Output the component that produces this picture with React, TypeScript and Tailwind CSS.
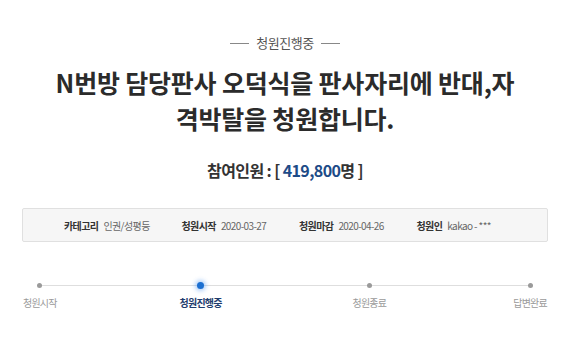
import React from 'react'

// Petition detail header: status, title, count, info box and progress steps
const infoItems = [
  { label: '카테고리', value: '인권/성평등' },
  { label: '청원시작', value: '2020-03-27' },
  { label: '청원마감', value: '2020-04-26' },
  { label: '청원인', value: 'kakao - ***' },
]

const steps = [
  { label: '청원시작', active: false, gap: 'ml-0' },
  { label: '청원진행중', active: true, gap: 'ml-[101px]' },
  { label: '청원종료', active: false, gap: 'ml-[109px]' },
  { label: '답변완료', active: false, gap: 'ml-[101px]' },
]

const App: React.FC = () => {
  return (
    <div className="w-[570px] h-[338px] bg-white overflow-hidden font-['Noto_Sans_CJK_KR','Noto_Sans',sans-serif]">
      {/* status */}
      <div className="pt-[34px] flex items-center justify-center">
        <span className="w-[19px] h-px bg-[#888]" />
        <span className="mx-[7px] text-[13px] leading-[18px] tracking-[-0.5px] text-[#555]">청원진행중</span>
        <span className="w-[19px] h-px bg-[#888]" />
      </div>

      {/* title */}
      <h1 className="mt-[12px] text-center text-[25px] leading-[36px] font-bold tracking-[-0.2px] text-[#2b2b2b]">
        N번방 담당판사 오덕식을 판사자리에 반대,자
        <br />
        격박탈을 청원합니다.
      </h1>

      {/* count */}
      <div className="mt-[22px] text-center text-[16px] leading-[24px] font-bold tracking-[-0.6px] text-[#333]">
        참여인원 : [ <span className="text-[#1d4b87]">419,800</span>명 ]
      </div>

      {/* info box */}
      <div className="mt-[26px] mx-[22px] h-[34px] border border-[#e0e0e0] rounded-[2px] bg-[#f6f6f6] flex items-center pl-[41px]">
        {infoItems.map((item) => (
          <div key={item.label} className="w-[117.5px] flex items-center text-[10px] tracking-[-0.6px]">
            <span className="font-bold text-[#333] mr-[5px]">{item.label}</span>
            <span className="text-[#666]">{item.value}</span>
          </div>
        ))}
      </div>

      {/* progress */}
      <div className="relative mt-[38px] px-[10px]">
        <div className="absolute left-[40px] right-[39px] top-[5px] h-px bg-[#dedede]" />
        <div className="flex">
          {steps.map((step) => (
            <div key={step.label} className={`${step.gap} w-[60px] flex flex-col items-center`}>
              <div className="h-[10px] flex items-center justify-center">
                {step.active ? (
                  <span className="relative w-[7px] h-[7px] rounded-full bg-[#1b6fd1] shadow-[0_0_4px_2px_rgba(80,150,240,0.45)]" />
                ) : (
                  <span className="relative w-[5px] h-[5px] rounded-full bg-[#9a9a9a]" />
                )}
              </div>
              <span
                className={
                  step.active
                    ? 'mt-[6px] text-[10px] leading-[14px] font-bold tracking-[-0.8px] text-[#1f3d6e]'
                    : 'mt-[6px] text-[10px] leading-[14px] tracking-[-0.8px] text-[#9a9a9a]'
                }
              >
                {step.label}
              </span>
            </div>
          ))}
        </div>
      </div>
    </div>
  )
}

export default App
